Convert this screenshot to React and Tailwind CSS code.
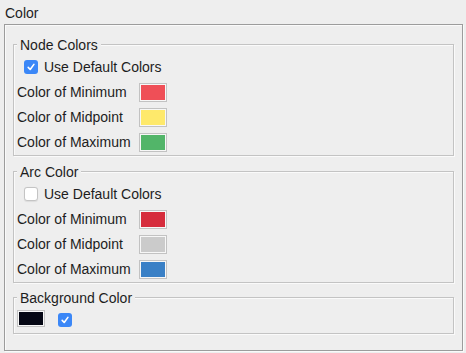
import React from 'react';

const Check = ({ checked }) =>
  checked ? (
    <span className="flex h-[14px] w-[14px] shrink-0 items-center justify-center rounded-[3px] bg-[#3b87f7]">
      <svg className="h-[10px] w-[10px]" viewBox="0 0 10 10" fill="none" stroke="#fff" strokeWidth={1.6} strokeLinecap="round" strokeLinejoin="round">
        <path d="M2.2 5.4l2 2.1L7.9 2.4" />
      </svg>
    </span>
  ) : (
    <span className="block h-[14px] w-[14px] shrink-0 rounded-[3px] border border-[#c4c4c4] bg-white shadow-[0_0.5px_1px_rgba(0,0,0,0.08)]" />
  );

const Swatch = ({ color, small }) => (
  <span className={`block border border-[#c2c2c2] bg-[#f7f7f7] p-[1px] ${small ? 'h-[17px] w-[28px]' : 'h-[19px] w-[28px]'}`}>
    <span className="block h-full w-full" style={{ backgroundColor: color }} />
  </span>
);

const Group = ({ title, className = '', children }) => (
  <fieldset className={`border border-[#c3c3c3] shadow-[1px_1px_0_#fafafa,inset_1px_1px_0_#fafafa] ${className}`}>
    <legend className="ml-[3px] bg-[#eeeeee] px-[3px] pt-[2px] leading-[16px]">{title}</legend>
    {children}
  </fieldset>
);

const ColorRows = ({ checked, colors }) => (
  <div className="pt-[1px] pl-[3px]">
    <div className="flex h-[26px] items-center gap-[6px] pl-[7px]">
      <Check checked={checked} />
      <span>Use Default Colors</span>
    </div>
    {[
      ['Color of Minimum', colors[0]],
      ['Color of Midpoint', colors[1]],
      ['Color of Maximum', colors[2]],
    ].map(([label, c]) => (
      <div key={label} className="flex h-[25px] items-center">
        <span className="w-[122px]">{label}</span>
        <Swatch color={c} />
      </div>
    ))}
  </div>
);

export default function App() {
  return (
    <div className="h-[353px] w-[466px] overflow-hidden bg-[#eeeeee] font-['Liberation_Sans',Arial,sans-serif] text-[14px] text-[#1d1d1d]">
      <div className="pt-[5px] pl-[5px] leading-[16px]">Color</div>
      <div className="mt-[3px] ml-[4px] w-[459px] border border-[#9c9c9c] px-[8px] pt-[10px] pb-[16px] shadow-[1px_1px_0_#fafafa,inset_1px_1px_0_#fafafa]">
        <Group title="Node Colors">
          <ColorRows checked colors={['#ef4f57', '#fee96b', '#52b569']} />
        </Group>
        <Group title="Arc Color" className="mt-[6px]">
          <ColorRows checked={false} colors={['#d62c3c', '#cbcbcb', '#3a80c6']} />
        </Group>
        <Group title="Background Color" className="mt-[5px]">
          <div className="flex items-start pt-[4px] pb-[6px] pl-[3px]">
            <Swatch color="#050714" small />
            <span className="mt-[3px] ml-[13px]">
              <Check checked />
            </span>
          </div>
        </Group>
      </div>
    </div>
  );
}
